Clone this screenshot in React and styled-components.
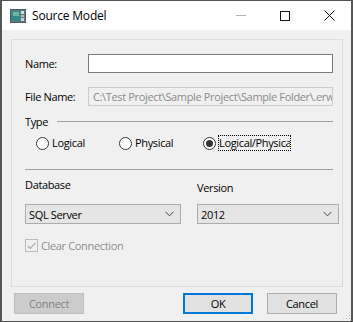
import React from 'react';
import styled, { createGlobalStyle } from 'styled-components';

const GlobalStyle = createGlobalStyle`
    html, body {
        margin: 0;
        padding: 0;
        background: #ffffff;
    }
    * {
        box-sizing: border-box;
    }
`;

const Window = styled.div`
    display: flex;
    flex-direction: column;
    width: 353px;
    height: 322px;
    border: 2px solid #555555;
    border-top-width: 1px;
    font-family: "Open Sans", "Noto Sans", sans-serif;
    font-size: 11px;
    letter-spacing: -0.35px;
    color: #000;
`;

const TitleBar = styled.div`
    display: flex;
    align-items: center;
    height: 29px;
    background: #ffffff;
    padding-left: 8px;
`;

const Title = styled.span`
    font-size: 12px;
    letter-spacing: -0.2px;
    margin-left: 6px;
    flex: 1;
`;

const WinButton = styled.div`
    display: flex;
    align-items: center;
    justify-content: center;
    width: 44px;
    height: 29px;
`;

const Body = styled.div`
    flex: 1;
    display: flex;
    flex-direction: column;
    background: #f0f0f0;
    padding: 9px 8px 7px 9px;
`;

const GroupBox = styled.div`
    display: flex;
    flex-direction: column;
    height: 248px;
    border: 1px solid #dcdcdc;
    padding: 14px 9px 0 13px;
`;

const FieldRow = styled.div`
    display: flex;
    align-items: center;
    height: 19px;
    margin-bottom: ${p => p.gap || 0}px;
`;

const Label = styled.span`
    width: 63px;
    color: #000;
`;

const TextBox = styled.div`
    flex: 1;
    height: 19px;
    border: 1px solid ${p => p.disabled ? '#cccccc' : '#7a7a7a'};
    background: ${p => p.disabled ? '#f0f0f0' : '#ffffff'};
    color: #8a8a8a;
    padding: 0 4px;
    line-height: 17px;
    white-space: nowrap;
    overflow: hidden;
`;

const SectionHead = styled.div`
    display: flex;
    align-items: center;
    gap: 9px;
    margin-top: 7px;
    height: 16px;
`;

const Line = styled.div`
    flex: 1;
    height: 1px;
    background: #a0a0a0;
`;

const RadioRow = styled.div`
    display: flex;
    align-items: center;
    height: 22px;
    margin-top: 3px;
    padding-left: 11px;
`;

const RadioItem = styled.label`
    display: flex;
    align-items: center;
    width: ${p => p.w}px;
`;

const RadioCircle = styled.span`
    position: relative;
    width: 13px;
    height: 13px;
    border-radius: 50%;
    border: 1px solid #333;
    background: #fff;
    margin-right: 3px;
    flex-shrink: 0;

    &::after {
        content: '';
        display: ${p => p.checked ? 'block' : 'none'};
        position: absolute;
        left: 2px;
        top: 2px;
        width: 7px;
        height: 7px;
        border-radius: 50%;
        background: #333;
    }
`;

const RadioText = styled.span`
    white-space: nowrap;
    overflow: hidden;
    max-width: ${p => p.max ? p.max + 'px' : 'none'};
    outline: ${p => p.focused ? '1px dotted #000' : 'none'};
    line-height: 14px;
`;

const Separator = styled.div`
    height: 1px;
    background: #a0a0a0;
    margin-top: 15px;
`;

const SelectGrid = styled.div`
    display: grid;
    grid-template-columns: 156px 142px;
    column-gap: 16px;
    margin-top: 7px;
`;

const SelectField = styled.div`
    display: flex;
    flex-direction: column;
`;

const SmallLabel = styled.span`
    height: 16px;
    margin-top: ${p => p.drop || 0}px;
    margin-bottom: ${p => 11 - (p.drop || 0)}px;
`;

const Select = styled.div`
    display: flex;
    align-items: center;
    justify-content: space-between;
    height: 20px;
    border: 1px solid #acacac;
    background: #e5e5e5;
    padding: 0 6px 0 3px;
`;

const CheckRow = styled.div`
    display: flex;
    align-items: center;
    margin-top: 14px;
    color: #8d8d8d;
`;

const CheckBox = styled.span`
    display: flex;
    align-items: center;
    justify-content: center;
    width: 13px;
    height: 13px;
    border: 1px solid #bcbcbc;
    background: #f0f0f0;
    margin-right: 3px;
`;

const ButtonRow = styled.div`
    display: flex;
    align-items: center;
    margin-top: 6px;
    padding: 0 6px 0 3px;
`;

const Button = styled.div`
    display: flex;
    align-items: center;
    justify-content: center;
    width: 70px;
    height: 21px;
    border: 1px solid ${p => p.primary ? '#0078d7' : p.disabled ? '#bfbfbf' : '#adadad'};
    background: ${p => p.disabled ? '#cccccc' : '#e1e1e1'};
    color: ${p => p.disabled ? '#838383' : '#000'};
    margin-left: ${p => p.ml || 0}px;
    box-shadow: ${p => p.primary ? 'inset 0 0 0 1px #0078d7' : 'none'};
`;

const Spacer = styled.div`
    flex: 1;
`;

const Grip = styled.div`
    position: absolute;
    right: 2px;
    bottom: 2px;
    width: 9px;
    height: 9px;
    background:
        radial-gradient(circle, #b8b8b8 0.8px, transparent 1px) 0 0 / 3px 3px;
    clip-path: polygon(100% 0, 100% 100%, 0 100%);
`;

const Frame = styled.div`
    position: relative;
`;

const Chevron = () => (
    <svg width="9" height="6" viewBox="0 0 9 6">
        <path d="M0.5 0.8 L4.5 4.8 L8.5 0.8" fill="none" stroke="#444" strokeWidth="1" />
    </svg>
);

const App = () => {
    return (
        <Frame>
            <GlobalStyle />
            <Window>
                <TitleBar>
                    <svg width="16" height="14" viewBox="0 0 16 14">
                        <rect x="0.5" y="0.5" width="15" height="13" fill="#5c7a84" stroke="#4a5a60" />
                        <rect x="2" y="2" width="8" height="10" fill="#2f8a8a" />
                        <rect x="3" y="3" width="6" height="4" fill="#6fb3a0" />
                        <rect x="11" y="2" width="3" height="3" fill="#d8d8d8" />
                        <rect x="11" y="6" width="3" height="2" fill="#a8c8a0" />
                        <rect x="11" y="9" width="3" height="3" fill="#d0d0d0" />
                    </svg>
                    <Title>Source Model</Title>
                    <WinButton>
                        <svg width="10" height="1"><rect width="10" height="1" fill="#b5b5b5" /></svg>
                    </WinButton>
                    <WinButton>
                        <svg width="10" height="10"><rect x="0.5" y="0.5" width="9" height="9" fill="none" stroke="#111" /></svg>
                    </WinButton>
                    <WinButton>
                        <svg width="11" height="11"><path d="M0.5 0.5 L10.5 10.5 M10.5 0.5 L0.5 10.5" stroke="#111" strokeWidth="1" /></svg>
                    </WinButton>
                </TitleBar>
                <Body>
                    <GroupBox>
                        <FieldRow gap={14}>
                            <Label>Name:</Label>
                            <TextBox />
                        </FieldRow>
                        <FieldRow>
                            <Label>File Name:</Label>
                            <TextBox disabled>C:\Test Project\Sample Project\Sample Folder\.erwin</TextBox>
                        </FieldRow>
                        <SectionHead>
                            <span>Type</span>
                            <Line />
                        </SectionHead>
                        <RadioRow>
                            <RadioItem w={83}>
                                <RadioCircle />
                                <RadioText>Logical</RadioText>
                            </RadioItem>
                            <RadioItem w={84}>
                                <RadioCircle />
                                <RadioText>Physical</RadioText>
                            </RadioItem>
                            <RadioItem>
                                <RadioCircle checked />
                                <RadioText focused max={71}>Logical/Physical</RadioText>
                            </RadioItem>
                        </RadioRow>
                        <Separator />
                        <SelectGrid>
                            <SelectField>
                                <SmallLabel>Database</SmallLabel>
                                <Select>
                                    <span>SQL Server</span>
                                    <Chevron />
                                </Select>
                            </SelectField>
                            <SelectField>
                                <SmallLabel drop={3}>Version</SmallLabel>
                                <Select>
                                    <span>2012</span>
                                    <Chevron />
                                </Select>
                            </SelectField>
                        </SelectGrid>
                        <CheckRow>
                            <CheckBox>
                                <svg width="9" height="8" viewBox="0 0 9 8">
                                    <path d="M0.8 4 L3.3 6.5 L8.3 1" fill="none" stroke="#b0b0b0" strokeWidth="1.2" />
                                </svg>
                            </CheckBox>
                            <span>Clear Connection</span>
                        </CheckRow>
                    </GroupBox>
                    <ButtonRow>
                        <Button disabled>Connect</Button>
                        <Spacer />
                        <Button primary>OK</Button>
                        <Button ml={14}>Cancel</Button>
                    </ButtonRow>
                </Body>
            </Window>
            <Grip />
        </Frame>
    );
};

export default App;
